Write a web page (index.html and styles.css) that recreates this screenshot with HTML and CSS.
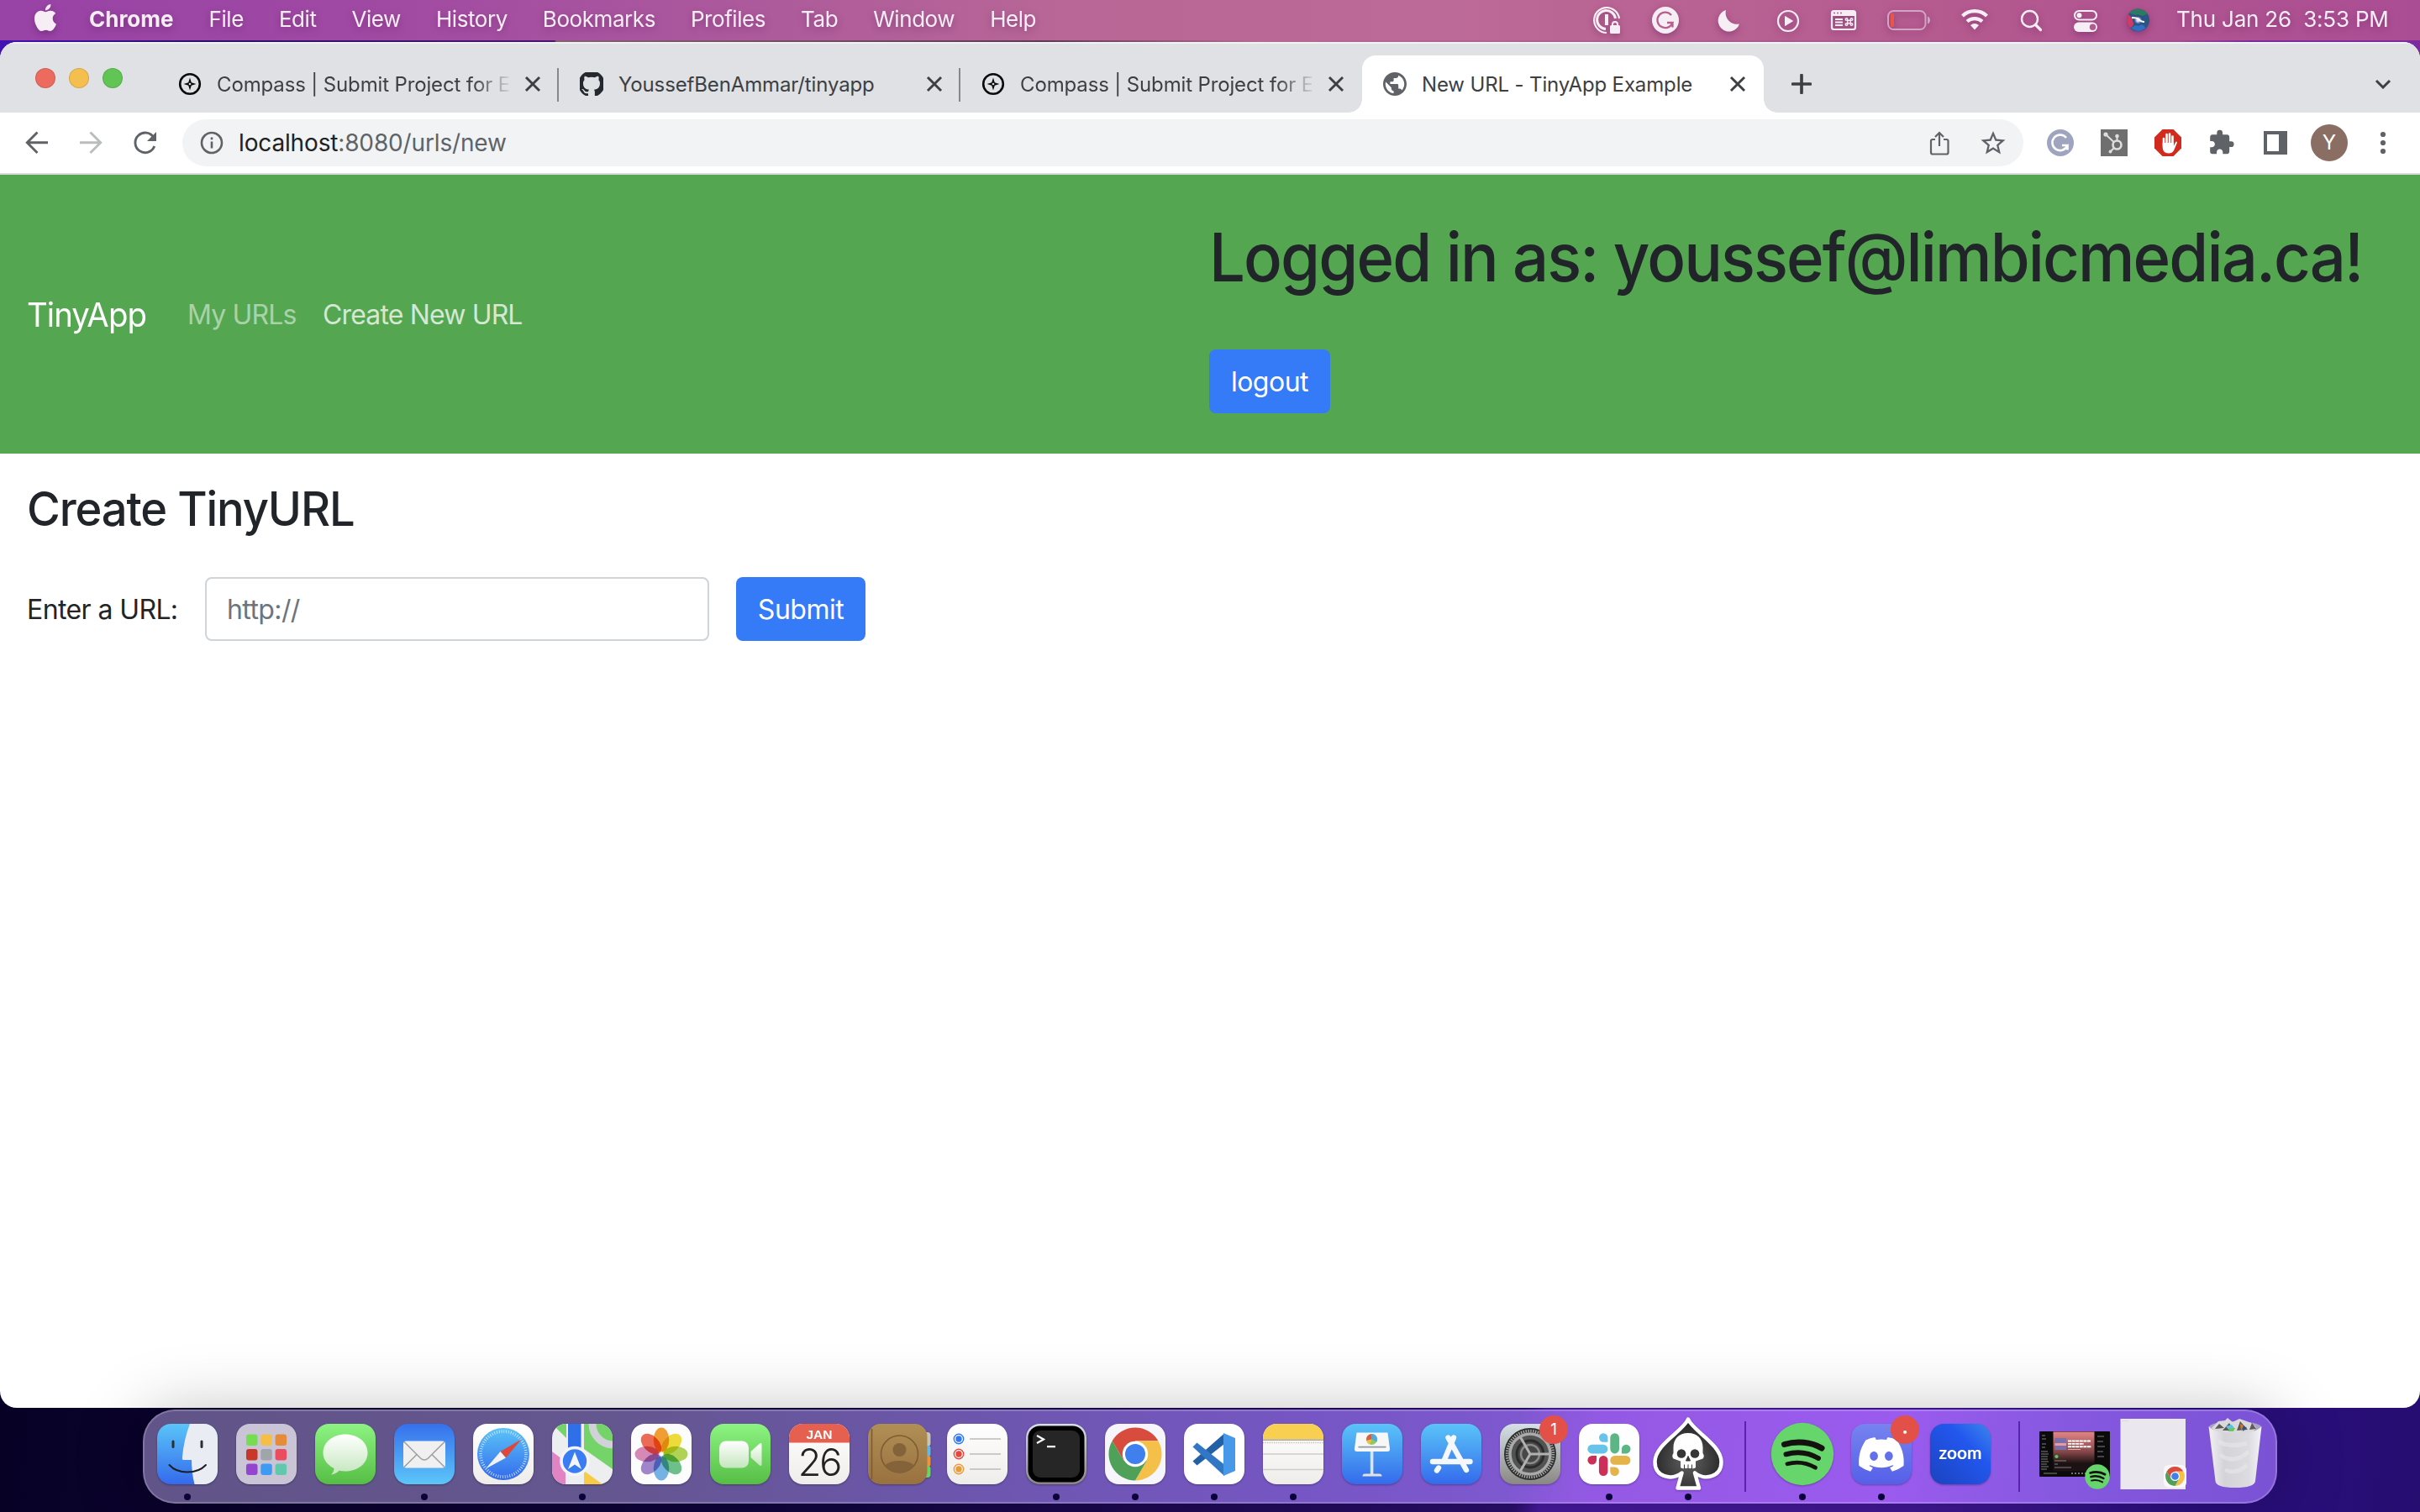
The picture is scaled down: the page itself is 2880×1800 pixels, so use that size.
FILE: index.html
```html
<!DOCTYPE html>
<html lang="en">
<head>
<meta charset="utf-8">
<title>New URL - TinyApp Example</title>
<link rel="stylesheet" href="styles.css">
</head>
<body>
<svg class="defs" width="0" height="0" aria-hidden="true">
  <defs>
    <linearGradient id="g-blue" x1="0" y1="0" x2="0" y2="1"><stop offset="0" stop-color="#5ac4f8"/><stop offset="1" stop-color="#346aec"/></linearGradient>
    <linearGradient id="g-mail" x1="0" y1="0" x2="0" y2="1"><stop offset="0" stop-color="#3670ec"/><stop offset="1" stop-color="#5cc6f9"/></linearGradient>
    <linearGradient id="g-green" x1="0" y1="0" x2="0" y2="1"><stop offset="0" stop-color="#8df382"/><stop offset="1" stop-color="#56be45"/></linearGradient>
    <linearGradient id="g-white" x1="0" y1="0" x2="0" y2="1"><stop offset="0" stop-color="#ffffff"/><stop offset="1" stop-color="#eeedea"/></linearGradient>
    <linearGradient id="g-silver" x1="0" y1="0" x2="0" y2="1"><stop offset="0" stop-color="#d5e0e6"/><stop offset="1" stop-color="#8a8783"/></linearGradient>
    <linearGradient id="g-bubble" x1="0" y1="0" x2="0" y2="1"><stop offset="0" stop-color="#ffffff"/><stop offset="1" stop-color="#c4e6bd"/></linearGradient>
    <linearGradient id="g-brown" x1="0" y1="0" x2="0" y2="1"><stop offset="0" stop-color="#b08f55"/><stop offset="1" stop-color="#99713f"/></linearGradient>
    <linearGradient id="g-zoom" x1="1" y1="0" x2="0" y2="1"><stop offset="0" stop-color="#3d86ea"/><stop offset=".35" stop-color="#2257ee"/><stop offset="1" stop-color="#1b43c0"/></linearGradient>
    <linearGradient id="g-discord" x1="0" y1="0" x2="0" y2="1"><stop offset="0" stop-color="#7683ef"/><stop offset="1" stop-color="#5560e8"/></linearGradient>
    <linearGradient id="g-trash" x1="0" y1="0" x2="1" y2="0"><stop offset="0" stop-color="#f2f1f5"/><stop offset=".3" stop-color="#d4d3d8"/><stop offset=".75" stop-color="#dcdbe0"/><stop offset="1" stop-color="#f4f3f8"/></linearGradient>
    <linearGradient id="g-album" x1="0" y1="0" x2="0" y2="1"><stop offset="0" stop-color="#e48587"/><stop offset=".5" stop-color="#87484b"/><stop offset=".8" stop-color="#1d1213"/></linearGradient>
    <radialGradient id="g-spade" cx=".5" cy=".6" r=".6"><stop offset="0" stop-color="#626262"/><stop offset="1" stop-color="#202020"/></radialGradient>
    <radialGradient id="g-siri" cx=".5" cy=".5" r=".5"><stop offset="0" stop-color="#ffffff"/><stop offset=".3" stop-color="#c9c3ee"/><stop offset=".65" stop-color="#2f5c9c"/><stop offset="1" stop-color="#2b4a6a"/></radialGradient>
    <clipPath id="tile"><rect width="72" height="72" rx="16.5"/></clipPath>
    <symbol id="close" viewBox="0 0 24 24"><path d="M5 5l14 14M19 5L5 19" stroke="#3c4043" stroke-width="2.9" stroke-linecap="square" fill="none"/></symbol>
    <symbol id="compass" viewBox="0 0 28 28"><circle cx="14" cy="14" r="11.8" fill="none" stroke="#0b0b0c" stroke-width="2.6"/><path d="M14 6.5l1.8 5.7 5.7 1.8-5.7 1.8L14 21.5l-1.8-5.7L6.500 14l5.700-1.800z" fill="#0b0b0c"/><circle cx="14" cy="14" r="1.300" fill="#dfe1e5"/></symbol>
    <symbol id="chrome" viewBox="0 0 72 72">
      <path d="M8.700 20.250A31.500 31.500 0 0 1 63.300 20.250H36V36L22.400 43.900z" fill="#d74c3d"/>
      <path d="M63.300 20.250A31.500 31.500 0 0 1 36 67.500L49.600 43.900 36 36V20.250z" fill="#f5c04a"/>
      <path d="M36 67.500A31.500 31.500 0 0 1 8.700 20.250L22.400 43.900 36 36l13.600 7.900z" fill="#4fa058"/>
      <circle cx="36" cy="36" r="15.200" fill="#fff"/><circle cx="36" cy="36" r="12" fill="#3f80ee"/>
    </symbol>
    <symbol id="spotify" viewBox="-2 -2 76 76">
      <circle cx="36" cy="36" r="37.200" fill="#66d56c"/>
      <g fill="none" stroke="#14120f" stroke-linecap="round"><path d="M14.500 24.500c15-4.500 32-3 44.500 4.500" stroke-width="7"/><path d="M16.500 36.300c13-3.800 27-2 38.500 4.700" stroke-width="5.900"/><path d="M18 47.700c11-3 23-1.500 33.500 4.500" stroke-width="4.800"/></g>
    </symbol>
  </defs>
</svg>

<header class="menubar">
  <svg class="apple" width="48" height="48" viewBox="0 0 48 48"><path transform="translate(9 5) scale(1.333)" fill="#f7edf5" d="M12.152 6.896c-.948 0-2.415-1.078-3.960-1.040-2.040.027-3.910 1.183-4.961 3.014-2.117 3.675-.546 9.103 1.519 12.090 1.013 1.454 2.208 3.090 3.792 3.039 1.520-.065 2.090-.987 3.935-.987 1.831 0 2.350.987 3.960.948 1.637-.026 2.676-1.480 3.676-2.948 1.156-1.688 1.636-3.325 1.662-3.415-.039-.013-3.182-1.221-3.220-4.857-.026-3.040 2.480-4.494 2.597-4.559-1.429-2.090-3.623-2.324-4.390-2.376-2-.156-3.675 1.090-4.610 1.090zM15.530 3.830c.843-1.012 1.400-2.427 1.245-3.830-1.207.052-2.662.805-3.532 1.818-.780.896-1.454 2.338-1.273 3.714 1.338.104 2.715-.688 3.559-1.701"/></svg>
  <nav class="menus">
    <span class="menu menu-app">Chrome</span><span class="menu">File</span><span class="menu">Edit</span><span class="menu">View</span><span class="menu">History</span><span class="menu">Bookmarks</span><span class="menu">Profiles</span><span class="menu">Tab</span><span class="menu">Window</span><span class="menu">Help</span>
  </nav>
  <div class="status">
    <svg width="60" height="48" viewBox="1890 0 60 48"><g fill="none" stroke="#f7edf5"><path d="M1912 39A15 15 0 1 1 1927 22" stroke-width="2.200"/><path d="M1911 34.500A11 11 0 1 1 1922.500 22" stroke-width="3"/><path d="M1912 17v13" stroke-width="4"/><path d="M1919 31v-2a3 3 0 0 1 6 0v3" stroke-width="2"/></g><rect x="1916" y="30" width="12" height="10" rx="1.500" fill="#f7edf5"/></svg>
    <svg width="80" height="48" viewBox="1950 0 80 48"><circle cx="1982" cy="24" r="16" fill="#f7edf5"/><path d="M1989 18a9.300 9.300 0 1 0 1.500 9h-6.500M1990.500 27v5.500" fill="none" stroke="#b5608f" stroke-width="2.300"/></svg>
    <svg width="70" height="48" viewBox="2030 0 70 48"><path d="M2054 12a13 13 0 1 0 16 16.500A13.500 13.500 0 0 1 2054 12z" fill="#f7edf5"/></svg>
    <svg width="60" height="48" viewBox="2100 0 60 48"><circle cx="2128" cy="25" r="12" fill="none" stroke="#f7edf5" stroke-width="2.200"/><path d="M2124.500 19.500v11l9-5.500z" fill="#f7edf5" stroke="#f7edf5" stroke-linejoin="round"/></svg>
    <svg width="70" height="48" viewBox="2160 0 70 48"><rect x="2180" y="13" width="28" height="22" rx="2.500" fill="none" stroke="#f7edf5" stroke-width="2.200"/><path d="M2179.500 14h29v5h-29z" fill="#f7edf5"/><path d="M2182 15.500h2m2 0h2m2 0h2" stroke="#b5608f" stroke-width="1.600"/><path d="M2184 23h9m-9 3.500h9m-9 3.500h9" stroke="#f7edf5" stroke-width="1.800"/><g fill="none" stroke="#f7edf5" stroke-width="1.400"><path d="M2198.800 24.300h3.400v3.400h-3.400z"/><circle cx="2197.500" cy="23" r="1.300"/><circle cx="2203.500" cy="23" r="1.300"/><circle cx="2197.500" cy="29" r="1.300"/><circle cx="2203.500" cy="29" r="1.300"/></g></svg>
    <svg width="86" height="48" viewBox="2230 0 86 48"><rect x="2247" y="13" width="44.500" height="22" rx="6.500" fill="none" stroke="#d5a3c4" stroke-width="2"/><path d="M2294 19.500c4 1.500 4 7.500 0 9z" fill="#d5a3c4"/><rect x="2250" y="16" width="4" height="16" rx="1.500" fill="#eb5545"/></svg>
    <svg width="70" height="48" viewBox="2316 0 70 48"><g fill="none" stroke="#f7edf5" stroke-width="4.200"><path d="M2335.500 19a21 21 0 0 1 29 0"/><path d="M2341 25.500a13.500 13.500 0 0 1 18 0"/></g><path d="M2345 30q5-4 10 0l-5 5.500z" fill="#f7edf5"/></svg>
    <svg width="64" height="48" viewBox="2386 0 64 48"><g fill="none" stroke="#f7edf5" stroke-linecap="round"><circle cx="2415.500" cy="22.500" r="9.500" stroke-width="2.400"/><path d="M2422.500 29.500l6 6" stroke-width="3.200"/></g></svg>
    <svg width="64" height="48" viewBox="2450 0 64 48"><rect x="2469" y="13" width="26" height="10.500" rx="5.250" fill="none" stroke="#f7edf5" stroke-width="2"/><circle cx="2474.500" cy="18.200" r="3" fill="#f7edf5"/><rect x="2468" y="26.500" width="28" height="11.500" rx="5.750" fill="#f7edf5"/><circle cx="2490.500" cy="32.300" r="3.700" fill="#b05a90"/></svg>
    <svg width="62" height="48" viewBox="2514 0 62 48"><circle cx="2544.500" cy="24" r="13.500" fill="#2c5580"/><path d="M2533 17a13.500 13.500 0 0 0 2 16.500q6-4 4-10z" fill="#cf3a66"/><path d="M2534 15.500a13.500 13.500 0 0 1 21.500 .5q-6 4-10 3t-11.500-3.500z" fill="#2b7a62"/><path d="M2536 33.500q9 7 17.500-.5-4-5-9-4t-8.500 4.500z" fill="#2f6fc4"/><circle cx="2544.500" cy="24" r="6.500" fill="url(#g-siri)"/><path d="M2537 21q7 0 9 2.500t6 2.500" stroke="#fff" stroke-width="1.800" fill="none"/></svg>
  </div>
  <time class="clock">Thu Jan 26&nbsp; 3:53 PM</time>
</header>

<main class="window">
  <div class="tabstrip">
    <div class="lights"><i class="light light-close"></i><i class="light light-min"></i><i class="light light-max"></i></div>
    <div class="tab"><svg class="favicon"><use href="#compass"/></svg><span class="tab-title tab-fade">Compass | Submit Project for E</span><svg class="tab-close"><use href="#close"/></svg></div>
    <div class="tab"><svg class="favicon" viewBox="0 0 16 16"><path transform="translate(-1 -1) scale(1.120)" fill="#24292f" d="M8 0C3.580 0 0 3.580 0 8c0 3.540 2.290 6.530 5.470 7.590.4.070.55-.17.55-.38 0-.19-.01-.82-.01-1.490-2.010.37-2.530-.49-2.690-.94-.09-.23-.48-.94-.82-1.130-.28-.15-.68-.52-.01-.53.63-.01 1.080.58 1.230.82.72 1.210 1.870.87 2.330.66.07-.52.28-.87.51-1.070-1.780-.2-3.640-.89-3.640-3.950 0-.87.31-1.590.82-2.150-.08-.2-.36-1.020.08-2.120 0 0 .67-.21 2.200.82.64-.18 1.320-.27 2-.27s1.360.09 2 .27c1.530-1.040 2.200-.82 2.200-.82.44 1.100.16 1.920.08 2.120.51.56.82 1.270.82 2.150 0 3.070-1.870 3.750-3.650 3.950.29.25.54.73.54 1.480 0 1.070-.01 1.930-.01 2.200 0 .21.15.46.55.38A8.010 8.010 0 0 0 16 8c0-4.420-3.580-8-8-8z"/></svg><span class="tab-title">YoussefBenAmmar/tinyapp</span><svg class="tab-close"><use href="#close"/></svg></div>
    <div class="tab tab-last"><svg class="favicon"><use href="#compass"/></svg><span class="tab-title tab-fade">Compass | Submit Project for E</span><svg class="tab-close"><use href="#close"/></svg></div>
    <div class="tab tab-active"><svg class="favicon" viewBox="2 2 20 20"><path fill="#5f6368" d="M12 2C6.480 2 2 6.480 2 12s4.480 10 10 10 10-4.480 10-10S17.520 2 12 2zm-1 17.930c-3.950-.49-7-3.850-7-7.930 0-.62.08-1.210.21-1.790L9 15v1c0 1.100.9 2 2 2v1.930zm6.900-2.540c-.26-.81-1-1.390-1.900-1.390h-1v-3c0-.55-.45-1-1-1H8v-2h2c.55 0 1-.45 1-1V7h2c1.100 0 2-.9 2-2v-.41c2.930 1.190 5 4.060 5 7.410 0 2.080-.8 3.970-2.100 5.390z"/></svg><span class="tab-title">New URL - TinyApp Example</span><svg class="tab-close"><use href="#close"/></svg></div>
    <svg class="new-tab" viewBox="0 0 24 24"><path d="M12 1.500v21M1.500 12h21" stroke="#3c4043" stroke-width="3.700" stroke-linecap="round"/></svg>
    <svg class="tab-search" viewBox="0 0 20 12"><path d="M2 2l8 8 8-8" fill="none" stroke="#3c4043" stroke-width="3"/></svg>
  </div>

  <div class="toolbar">
    <svg width="217" height="72" viewBox="0 134 217 72"><g fill="none" stroke-width="2.900"><path d="M57 169.800H33M44.500 157.500L32.300 169.800l12.200 12.300" stroke="#5f6368"/><path d="M95 169.800h24M107.500 157.500l12.200 12.300-12.200 12.300" stroke="#babcbe"/><path d="M183 164a11.800 11.800 0 1 0 .8 10" stroke="#5f6368"/></g><path d="M186 157v11h-11z" fill="#5f6368"/></svg>
    <div class="omnibox">
      <svg class="info" viewBox="0 0 28 28"><circle cx="14" cy="14" r="12" fill="none" stroke="#5f6368" stroke-width="2.600"/><path d="M14 12.500v8M14 7.500v2.800" stroke="#5f6368" stroke-width="2.600"/></svg>
      <span class="url"><b>localhost</b>:8080/urls/new</span>
      <svg width="128" height="56" viewBox="2280 142 128 56"><g fill="none" stroke="#5f6368" stroke-width="2.200"><path d="M2303 166h-3a2 2 0 0 0-2 2v13.500a2 2 0 0 0 2 2h16.500a2 2 0 0 0 2-2V168a2 2 0 0 0-2-2h-3.500M2308 174v-15.500M2303 163l5-5 5 5"/></g><path transform="translate(2354.600 153) scale(1.450)" fill="#5f6368" d="M22 9.240l-7.190-.62L12 2 9.190 8.630 2 9.240l5.460 4.730L5.820 21 12 17.270 18.180 21l-1.630-7.030L22 9.240zM12 15.400l-3.760 2.270 1-4.280-3.320-2.880 4.380-.38L12 6.100l1.710 4.040 4.380.38-3.320 2.880 1 4.280L12 15.400z"/></svg>
    </div>
    <svg width="342" height="72" viewBox="2408 134 342 72">
      <circle cx="2452" cy="170" r="16" fill="#9fa5bf"/><path d="M2459 164a9.300 9.300 0 1 0 1.500 9h-6.500M2460.500 173v5.500" fill="none" stroke="#fff" stroke-width="2.600"/>
      <rect x="2500" y="154" width="32" height="32" fill="#6f6f6f"/><g stroke="#dedede" fill="none"><circle cx="2519.500" cy="172.500" r="5" stroke-width="2.600"/><path d="M2506 160l9.500 9M2519.500 162v5M2516 176l-4 4" stroke-width="2"/></g><g fill="#dedede"><circle cx="2506" cy="160" r="2.600"/><circle cx="2519.500" cy="162" r="2.300"/><circle cx="2511.500" cy="180.500" r="1.900"/></g>
      <path d="M2573.500 154h13l9.500 9.500v13l-9.500 9.500h-13l-9.500-9.500v-13z" fill="#d22b1d"/><path d="M2575 174v-9M2578.500 172v-12M2582 172v-12.500M2585.500 172v-9.500" stroke="#fff" stroke-width="2.600" stroke-linecap="round"/><path d="M2573.700 170h13.200v4l2-4.500c1-1.800 2.600-1 1.800 1l-3.600 8.500q-1.800 3.500-6.200 3.500c-5 0-7.200-3-7.200-7.500z" fill="#fff"/>
      <path transform="translate(2627.500 153.500) scale(1.350)" fill="#5f6368" d="M20.500 11H19V7c0-1.100-.9-2-2-2h-4V3.500a2.500 2.500 0 0 0-5 0V5H4c-1.100 0-1.990.9-1.990 2v3.800H3.500c1.490 0 2.700 1.210 2.700 2.700s-1.210 2.700-2.700 2.700H2V20c0 1.100.9 2 2 2h3.800v-1.500c0-1.490 1.210-2.700 2.700-2.700s2.700 1.210 2.700 2.700V22H17c1.100 0 2-.9 2-2v-4h1.500a2.500 2.500 0 0 0 0-5z"/>
      <path d="M2694 156h28v28h-28zM2698 160v20h14v-20z" fill="#5f6368" fill-rule="evenodd"/>
    </svg>
    <span class="avatar">Y</span>
    <svg width="86" height="72" viewBox="2794 134 86 72"><g fill="#5f6368"><circle cx="2836" cy="160" r="3.100"/><circle cx="2836" cy="170" r="3.100"/><circle cx="2836" cy="180" r="3.100"/></g></svg>
  </div>

  <div class="navbar">
    <div class="brand"><a>TinyApp</a></div>
    <a class="nav-link nav-urls">My URLs</a>
    <a class="nav-link nav-create">Create New URL</a>
    <div class="account">
      <h1>Logged in as: youssef@limbicmedia.ca!</h1>
      <button class="btn btn-logout">logout</button>
    </div>
  </div>

  <section class="content">
    <h3>Create TinyURL</h3>
    <form class="url-form">
      <label>Enter a URL:</label>
      <div class="field">http://</div>
      <button type="button" class="btn btn-submit">Submit</button>
    </form>
  </section>
</main>

<footer class="dock">
  <div class="slot running"><svg class="app" viewBox="0 0 72 72"><g clip-path="url(#tile)"><rect width="72" height="72" fill="url(#g-blue)"/><path d="M39 0h33v72H44.500Q41 58 41 43H31Q29.500 43 30 39 32 18 39 0z" fill="#e9edf3"/></g><path d="M19 21v6.500M53 21v6.500" stroke="#2a2e35" stroke-width="3" stroke-linecap="round"/><path d="M14.500 49q7.500 8.500 21.500 8.500T58 49" fill="none" stroke="#1c1e22" stroke-width="2" stroke-linecap="round"/></svg></div>
  <div class="slot"><svg class="app" viewBox="0 0 72 72"><rect width="72" height="72" rx="16.500" fill="#c9c4d6"/><g><rect x="12" y="12.500" width="13.500" height="13.500" rx="3" fill="#76dd52"/><rect x="29.300" y="12.500" width="13.500" height="13.500" rx="3" fill="#f5bf45"/><rect x="46.600" y="12.500" width="13.500" height="13.500" rx="3" fill="#e58b3a"/><rect x="12" y="30" width="13.500" height="13.500" rx="3" fill="#c9372b"/><rect x="29.300" y="30" width="13.500" height="13.500" rx="3" fill="#9fa5a8"/><rect x="46.600" y="30" width="13.500" height="13.500" rx="3" fill="#ea4d60"/><rect x="12" y="47.500" width="13.500" height="13.500" rx="3" fill="#9445d0"/><rect x="29.300" y="47.500" width="13.500" height="13.500" rx="3" fill="#3f9bf2"/><rect x="46.600" y="47.500" width="13.500" height="13.500" rx="3" fill="#61c8ae"/></g></svg></div>
  <div class="slot"><svg class="app" viewBox="0 0 72 72"><rect width="72" height="72" rx="16.500" fill="url(#g-green)"/><path d="M36 12.500c15 0 26.500 9.500 26.500 22S51 56.500 36 56.500q-4 0-7.500-.8-4 4.300-9.500 4.800 3.500-3.500 3.500-7.500C14.500 49 9.500 42.500 9.500 34.500c0-12.500 11.500-22 26.500-22z" fill="url(#g-bubble)"/></svg></div>
  <div class="slot running"><svg class="app" viewBox="0 0 72 72"><rect width="72" height="72" rx="16.500" fill="url(#g-mail)"/><rect x="11" y="20.500" width="50" height="32" rx="3.500" fill="#f0f0f1"/><path d="M12 51.500l15-15M60 51.500L45 36.500M12 21.500l19.500 19.500q4.500 4 9 0L60 21.500" fill="none" stroke="#a0a0a4" stroke-width="1.600"/></svg></div>
  <div class="slot"><svg class="app" viewBox="0 0 72 72"><rect width="72" height="72" rx="16.500" fill="url(#g-white)"/><circle cx="36" cy="36" r="31" fill="url(#g-blue)"/><circle cx="36" cy="36" r="27" fill="none" stroke="#dcecff" stroke-width="3.600" stroke-dasharray=".8 2.027"/><path d="M57.500 18.500L39 40.500 32.500 33z" fill="#e0473b"/><path d="M15 53.500L32.500 33 39 40.500z" fill="#f2f2f4"/></svg></div>
  <div class="slot running"><svg class="app" viewBox="0 0 72 72"><g clip-path="url(#tile)"><rect width="72" height="72" fill="#eceef0"/><path d="M0 0h17v17zM38 0h34v54L38 30z" fill="#74d46a"/><path d="M0 33l16 12v27H0z" fill="#e283c4"/><path d="M38 56l22 16H38z" fill="#f7cb45"/><path d="M72 25a25 25 0 0 1-24-25" fill="none" stroke="#d0d2d8" stroke-width="9"/><rect x="19" width="15.500" height="40" fill="#2f6fe8"/></g><circle cx="27" cy="44.500" r="16" fill="#3a7cf3" stroke="#f4f4f6" stroke-width="3.600"/><path d="M27 33.500l8 20.500-8-5.500-8 5.500z" fill="#f4f6fa"/></svg></div>
  <div class="slot"><svg class="app" viewBox="0 0 72 72"><rect width="72" height="72" rx="16.500" fill="#fdfcfd"/><g class="petals"><ellipse cx="36" cy="19" rx="9.300" ry="14.500" fill="#f2a034"/><ellipse cx="36" cy="19" rx="9.300" ry="14.500" fill="#eede3a" transform="rotate(45 36 36)"/><ellipse cx="36" cy="19" rx="9.300" ry="14.500" fill="#b2d657" transform="rotate(90 36 36)"/><ellipse cx="36" cy="19" rx="9.300" ry="14.500" fill="#6fc28a" transform="rotate(135 36 36)"/><ellipse cx="36" cy="19" rx="9.300" ry="14.500" fill="#76b3e4" transform="rotate(180 36 36)"/><ellipse cx="36" cy="19" rx="9.300" ry="14.500" fill="#a088cc" transform="rotate(225 36 36)"/><ellipse cx="36" cy="19" rx="9.300" ry="14.500" fill="#d88bb8" transform="rotate(270 36 36)"/><ellipse cx="36" cy="19" rx="9.300" ry="14.500" fill="#ee6c56" transform="rotate(315 36 36)"/></g></svg></div>
  <div class="slot"><svg class="app" viewBox="0 0 72 72"><rect width="72" height="72" rx="16.500" fill="url(#g-green)"/><rect x="11" y="20.500" width="35" height="32" rx="8" fill="url(#g-bubble)"/><path d="M48.500 33L59 23.500q2.500-1.500 2.500 1.500v23q0 3-2.500 1.500L48.500 40z" fill="url(#g-bubble)"/></svg></div>
  <div class="slot"><svg class="app" viewBox="0 0 72 72"><g clip-path="url(#tile)"><rect width="72" height="72" fill="url(#g-white)"/><rect width="72" height="22.500" fill="#e5604f"/></g><text class="cal-month" x="36" y="17.500">JAN</text><text class="cal-day" x="36" y="61.500">26</text></svg></div>
  <div class="slot"><svg class="app" viewBox="0 0 72 72"><rect x="62" y="10" width="12.500" height="17" rx="4" fill="#c8c5b8"/><rect x="62" y="26" width="12.500" height="13" rx="3" fill="#64b7e6"/><rect x="62" y="38" width="12.500" height="13" rx="3" fill="#ef9336"/><rect x="62" y="50" width="12.500" height="14" rx="4" fill="#68d663"/><rect width="70.500" height="72" rx="15" fill="url(#g-brown)"/><g fill="none" stroke="#7d5c33" stroke-width="1.600"><path d="M4.500 6v60"/><circle cx="37.500" cy="36" r="22"/></g><circle cx="37.500" cy="31" r="8" fill="#84623a"/><path d="M20 49.500q6-5.500 17.500-5.500T55 49.500A22 22 0 0 1 20 49.500z" fill="#84623a"/></svg></div>
  <div class="slot"><svg class="app" viewBox="0 0 72 72"><rect width="72" height="72" rx="16.500" fill="url(#g-white)"/><g fill="none" stroke-width="1.400"><circle cx="14" cy="18" r="5.700" stroke="#2f78f0"/><circle cx="14" cy="36" r="5.700" stroke="#e2493a"/><circle cx="14" cy="54" r="5.700" stroke="#ea9b36"/></g><circle cx="14" cy="18" r="3.700" fill="#2f78f0"/><circle cx="14" cy="36" r="3.700" fill="#e2493a"/><circle cx="14" cy="54" r="3.700" fill="#ea9b36"/><path d="M27 18h37M27 36h37M27 54h37" stroke="#bdbcbb" stroke-width="1.700"/></svg></div>
  <div class="slot running"><svg class="app" viewBox="0 0 72 72"><rect width="72" height="72" rx="16.500" fill="url(#g-silver)"/><rect x="2.500" y="2.500" width="67" height="67" rx="14" fill="#000"/><rect x="8" y="8" width="56" height="56" rx="9" fill="#262626"/><path d="M13 14l8 4.500-8 4.500M25 27.200h10" fill="none" stroke="#fff" stroke-width="2.200"/></svg></div>
  <div class="slot running"><svg class="app" viewBox="0 0 72 72"><rect width="72" height="72" rx="16.500" fill="#f6f5fb"/><use href="#chrome"/></svg></div>
  <div class="slot running"><svg class="app" viewBox="0 0 72 72"><rect width="72" height="72" rx="16.500" fill="#fff"/><path d="M10.500 44.500l5 5L48 24V11.500z" fill="#2460a6"/><path d="M10.500 27.500l5-5L48 48.500v13.500z" fill="#3277c5"/><path d="M47 11l14 6v39l-14 6z" fill="#4898ea"/></svg></div>
  <div class="slot running"><svg class="app" viewBox="0 0 72 72"><g clip-path="url(#tile)"><rect width="72" height="72" fill="url(#g-white)"/><rect width="72" height="18.500" fill="#f8cf50"/><path d="M0 19.200h72" stroke="#aaa69c" stroke-width="1.500"/><path d="M0 22.500h72" stroke="#bdbab3" stroke-width="1.600" stroke-dasharray="1.200 1.400"/><path d="M0 36h72M0 54.500h72" stroke="#cfcdca" stroke-width="1.300"/></g></svg></div>
  <div class="slot"><svg class="app" viewBox="0 0 72 72"><rect width="72" height="72" rx="16.500" fill="url(#g-blue)"/><path d="M33.800 33h3.600v28h-3.600z" fill="#dfe4ea"/><path d="M17.500 10.500h37l2.500 19q.4 3.500-3 3.500H18q-3.400 0-3-3.500z" fill="#f7f7f8"/><path d="M19.500 27.700h33" stroke="#8e99a6" stroke-width="1.800"/><path d="M24.500 62.500q0-3 3-3h17q3 0 3 3z" fill="#e3e1dd"/><circle cx="35.500" cy="18.500" r="6.500" fill="#8fc957"/><path d="M35.500 18.500V12a6.500 6.500 0 0 0-6.300 8z" fill="#e15a48"/><path d="M35.500 18.500V12a6.500 6.500 0 0 1 5.800 9.500z" fill="#4fa9e8"/><path d="M35.500 18.500l-6.300 1.600a6.500 6.500 0 0 0 4 4.500z" fill="#f2bf43"/></svg></div>
  <div class="slot"><svg class="app" viewBox="0 0 72 72"><rect width="72" height="72" rx="16.500" fill="url(#g-blue)"/><g stroke="#f4f7fb" stroke-width="6.400" stroke-linecap="round"><path d="M39 16.500L27.500 44M14 45h44.500M21 52.500l-2 3M32.500 16.500L54 55"/></g></svg></div>
  <div class="slot"><svg class="app" viewBox="0 0 72 72"><rect width="72" height="72" rx="16.500" fill="url(#g-silver)"/><circle cx="36" cy="36" r="31" fill="#2c2d2d"/><circle cx="36" cy="36" r="27.500" fill="none" stroke="#a2a3a2" stroke-width="3.500" stroke-dasharray="1.500 1.380"/><circle cx="36" cy="36" r="24" fill="#525352" stroke="#a9aaa9" stroke-width="3.500"/><circle cx="36" cy="36" r="16" fill="#464746" stroke="#2a2b2b" stroke-width="3"/><circle cx="36" cy="36" r="11" fill="none" stroke="#888988" stroke-width="2.500"/><path d="M36 36h23M36 36L24.500 16M36 36L24.500 56" stroke="#b0b1b0" stroke-width="3"/></svg><span class="badge">1</span></div>
  <div class="slot running"><svg class="app" viewBox="0 0 72 72"><rect width="72" height="72" rx="16.500" fill="#fefefe"/><g fill="#67c3ea"><path d="M34.400 21.700h-5.200a5.200 5.200 0 1 1 5.200-5.200z"/><rect x="10.300" y="24.700" width="24.100" height="10.700" rx="5.300"/></g><g fill="#5cb585"><rect x="37.300" y="11.300" width="10.700" height="24.100" rx="5.300"/><path d="M50.900 35.400v-5.300a5.300 5.300 0 1 1 5.300 5.300z"/></g><g fill="#cc3058"><path d="M21 38v5.300a5.300 5.300 0 1 1-5.300-5.300z"/><rect x="23.900" y="38" width="10.500" height="24" rx="5.200"/></g><g fill="#e4b44a"><rect x="37.300" y="38" width="24.100" height="10.700" rx="5.300"/><path d="M37.300 51.400h5.400a5.300 5.300 0 1 1-5.400 5.300z"/></g></svg></div>
  <div class="slot running"><svg class="app" viewBox="0 0 72 72"><path d="M36-5.500C42 9 75.500 24.500 75.500 45.500 75.500 63 56 68 44 58.500L49 76.500H23.500L28.500 58.500C16 68-3.500 63-3.500 45.500-3.500 24.500 30 9 36-5.500z" fill="url(#g-spade)" stroke="#fff" stroke-width="4.500" stroke-linejoin="round"/><path d="M36 11c11 0 17.500 7 17.500 17v7q2.500 3.500 0 6.500l-8.500 3v7.500q-2.300 2-4.500 1h-9q-2.200 1-4.500-1v-7.500l-8.500-3q-2.500-3 0-6.500v-7c0-10 6.500-17 17.500-17z" fill="#fff"/><circle cx="28" cy="35.500" r="5.300" fill="#363636"/><circle cx="44" cy="35.500" r="5.300" fill="#363636"/><path d="M36 38.500l2.500 5.500h-5zM31.500 48.500v5M36 48.500v5M40.500 48.500v5" fill="#363636" stroke="#363636"/></svg></div>
  <div class="divider divider-a"></div>
  <div class="slot running"><svg class="app app-round"><use href="#spotify"/></svg></div>
  <div class="slot running"><svg class="app" viewBox="0 0 72 72"><rect width="72" height="72" rx="16.500" fill="url(#g-discord)"/><path transform="translate(9.200 9.700) scale(2.230)" fill="#fff" d="M20.317 4.370a19.791 19.791 0 0 0-4.885-1.515c-.290.400-.520.850-.690 1.287a18.270 18.270 0 0 0-5.487 0c-.170-.430-.400-.880-.690-1.287A19.736 19.736 0 0 0 3.650 4.398C.533 9.046-.319 13.580.099 18.058a19.900 19.900 0 0 0 6.060 3.050c.490-.650.930-1.350 1.280-2.080-.680-.250-1.340-.560-1.960-.930l.480-.380c3.928 1.793 8.180 1.793 12.061 0l.490.380c-.620.370-1.280.680-1.960.940.360.720.780 1.410 1.280 2.060a19.830 19.830 0 0 0 6.070-3.040c.500-5.177-.838-9.674-3.583-13.688zM8.020 15.331c-1.182 0-2.157-1.086-2.157-2.419s.956-2.419 2.157-2.419c1.211 0 2.176 1.095 2.157 2.419 0 1.333-.956 2.419-2.157 2.419zm7.975 0c-1.183 0-2.157-1.086-2.157-2.419s.955-2.419 2.157-2.419c1.211 0 2.176 1.095 2.157 2.419 0 1.333-.946 2.419-2.157 2.419z"/></svg><span class="badge badge-dot">•</span></div>
  <div class="slot"><svg class="app" viewBox="0 0 72 72"><rect width="72" height="72" rx="16.500" fill="url(#g-zoom)"/><text class="zoom-word" x="36" y="42" textLength="51" lengthAdjust="spacingAndGlyphs">zoom</text></svg></div>
  <div class="divider divider-b"></div>
  <div class="slot slot-thumb"><svg width="84" height="84" viewBox="2427 1689 84 84">
    <rect x="2427" y="1704" width="84" height="54" rx="1" fill="#0c0b0c"/><rect x="2443.500" y="1704.500" width="49" height="47" fill="url(#g-album)"/>
    <rect x="2445.500" y="1712" width="13.500" height="14" fill="#7c6fa9"/><path d="M2445.500 1718h13.500v3h-13.500z" fill="#e79aa0"/>
    <g stroke="#fff" stroke-width="1.900" stroke-dasharray="4 .6"><path d="M2461 1715.500h27M2461 1718.900h19M2461 1722.300h28"/></g><path d="M2461 1725.500h15" stroke="#e5b5b5" stroke-width=".9"/>
    <g stroke="#8d8d8d" stroke-width=".9"><path d="M2430 1709h4M2430 1713h5M2430 1719h5M2430 1723h4M2429 1728h8M2429 1731h9M2429 1734h8M2429 1737h8M2429 1740h9M2429 1743h7M2429 1746h9M2429 1749h7M2496 1710h8M2496 1716h7M2496 1722h9M2496 1728h7M2496 1734h8M2445 1739h14M2445 1743h4M2445 1747h20M2432 1754h16"/></g><circle cx="2447.500" cy="1734" r="2.100" fill="#56cf62"/><path d="M2465 1754h20" stroke="#ddd" stroke-dasharray="2 2"/>
    <svg x="2481" y="1743" width="30" height="30"><use href="#spotify"/></svg></svg></div>
  <div class="slot slot-doc"><svg width="84" height="84" viewBox="2524 1689 84 84"><rect x="2524.500" y="1689" width="77.500" height="84" fill="#eae7ef"/><path d="M2527 1691.500h7" stroke="#d0cdd6" stroke-dasharray="1.500 1"/><rect x="2576" y="1744" width="27" height="27" rx="6" fill="#f8f7fa"/><svg x="2576.500" y="1744.500" width="26" height="26"><use href="#chrome"/></svg></svg></div>
  <div class="slot slot-trash"><svg width="64" height="84" viewBox="0 0 64 84"><ellipse cx="32" cy="11" rx="31" ry="7" fill="#a9a2c6"/><path d="M4 12L12 4l8-1 3-3 6 5 8-4 6 2 8 3 6 5-5 9-20 3-20-3z" fill="#d9d8db"/><path d="M8 13l5-6 6 5zM17 15l8-9 5 9zM34 15l4-11 9 10zM49 14l3-8 5 7z" fill="#5d5a58"/><path d="M21 10l7-2 3 4-7 2z" fill="#5bc2e6"/><path d="M26 12l6 0-2 4-6 0z" fill="#68c95e"/><path d="M38 7l4 2-3 6z" fill="#d9762f"/><path d="M42 9l4 3-5 4z" fill="#304f8d"/><path d="M.500 10Q8 18.500 32 18.500T63.500 10L56 75q-1 8-24 8T8.500 75z" fill="url(#g-trash)"/><path d="M12 28q14 8 34 2M14 44q18 12 34-4M20 62q14 6 26-6" stroke="#e8e7ea" stroke-width="5" fill="none" opacity=".6"/></svg></div>
</footer>
</body>
</html>
```
FILE: styles.css
```css
* { box-sizing: border-box; }
body {
  margin: 0;
  width: 2880px;
  height: 1800px;
  overflow: hidden;
  display: flex;
  flex-direction: column;
  font-family: Inter, "Liberation Sans", sans-serif;
  background:
    linear-gradient(90deg, #4212b4 0, #2a0f70 8%, #4a1670 22.900%, #86606f 23%, #5e3a55 43%, #b36a94 52%, #a04f8e 90%, #7a2aa0 93%, #7e2a9e 100%) top / 100% 90px no-repeat,
    linear-gradient(95deg, #070122 0, #10053f 35%, #1e0a55 50%, #2c0f70 64.500%, #4a1aa3 65.500%, #43189a 80%, #2a0f80 92%, #260d70 100%);
}
svg { display: block; flex: none; }
.defs { position: absolute; }

.menubar {
  height: 48px;
  flex: none;
  display: flex;
  align-items: center;
  padding-left: 29px;
  color: #f7edf5;
  font-size: 26px;
  background: linear-gradient(90deg, #9843a6 0, #9f48a4 14%, #b86796 44%, #bc6a97 60%, #b4598f 82%, #ab4d94 100%);
}
.menubar svg, .menubar .menu, .clock { filter: drop-shadow(0 3px 4px rgba(70, 10, 70, .35)); }
.menus { display: flex; gap: 42px; padding: 0 0 3px 29px; letter-spacing: -.44px; }
.menu-app { font-weight: 700; letter-spacing: 0; }
.status { display: flex; margin-left: auto; }
.clock { width: 304px; padding: 0 0 3px 14px; white-space: nowrap; letter-spacing: -.2px; }

.window {
  height: 1626px;
  margin-top: 2px;
  flex: none;
  display: flex;
  flex-direction: column;
  background: #fff;
  border-radius: 20px;
  overflow: hidden;
}
.tabstrip {
  height: 84px;
  flex: none;
  display: flex;
  align-items: flex-end;
  background: #dfe1e5;
  border-top: 2px solid #f1f2f4;
}
.lights { display: flex; gap: 16px; padding-left: 42px; width: 187px; align-self: center; }
.light { width: 24px; height: 24px; border-radius: 50%; border: 1px solid rgba(0, 0, 0, .12); }
.light-close { background: #ed6a5f; }
.light-min { background: #f5bf4f; }
.light-max { background: #61c555; }
.tab {
  width: 478px;
  height: 68px;
  flex: none;
  display: flex;
  align-items: center;
  padding: 0 19px 0 25px;
  font-size: 24px;
  letter-spacing: -.14px;
  color: #3c4043;
  background: linear-gradient(#85888c, #85888c) right 0 top 15px / 2px 40px no-repeat;
}
.tab-last { background: none; }
.tab-active { background: #fff; border-radius: 16px 16px 0 0; position: relative; }
.tab-active::before, .tab-active::after {
  content: "";
  position: absolute;
  bottom: 0;
  width: 16px;
  height: 16px;
}
.tab-active::before { right: 100%; background: radial-gradient(circle at 0 0, transparent 15.500px, #fff 16px); }
.tab-active::after { left: 100%; background: radial-gradient(circle at 100% 0, transparent 15.500px, #fff 16px); }
.favicon { width: 28px; height: 28px; }
.tab-title { flex: 1; margin-left: 18px; white-space: nowrap; overflow: hidden; }
.tab-fade { -webkit-mask-image: linear-gradient(90deg, #000 305px, transparent 352px); mask-image: linear-gradient(90deg, #000 305px, transparent 352px); }
.tab-close { width: 24px; height: 24px; }
.new-tab { width: 24px; height: 24px; margin: 0 0 22px 33px; }
.tab-search { width: 20px; height: 12px; margin: 0 34px 28px auto; }

.toolbar {
  height: 74px;
  flex: none;
  display: flex;
  align-items: flex-start;
  border-bottom: 2px solid #dadce0;
}
.omnibox {
  flex: 1;
  height: 56px;
  margin-top: 8px;
  border-radius: 28px;
  background: #f1f3f4;
  display: flex;
  align-items: center;
  padding-left: 21px;
}
.info { width: 28px; height: 28px; }
.url { flex: 1; margin-left: 18px; font-size: 28px; letter-spacing: -.15px; color: #5f6368; }
.url b { font-weight: 400; color: #202124; }
.avatar {
  width: 44px;
  height: 44px;
  margin-top: 14px;
  border-radius: 50%;
  background: #8a6e63;
  color: #fff;
  font-size: 24px;
  line-height: 44px;
  text-align: center;
}

.navbar {
  height: 332px;
  flex: none;
  display: flex;
  align-items: center;
  padding: 0 32px;
  background: #54a651;
}
.brand { width: 191px; padding-top: 2px; font-size: 40px; line-height: 60px; letter-spacing: -1px; color: #fff; }
.brand a { display: inline-block; transform: scaleX(.96); transform-origin: left; }
.nav-link { width: 161px; padding-top: 2px; font-size: 32px; line-height: 48px; letter-spacing: -.85px; color: rgba(255, 255, 255, .5); }
.nav-create { color: rgba(255, 255, 255, .75); width: auto; }
.account { margin-left: auto; width: 1409px; padding-top: 2px; }
h1, h3 { margin: 0; font-weight: 500; color: #212529; white-space: nowrap; transform-origin: left; }
h1 { font-size: 80px; line-height: 96px; margin-bottom: 62px; letter-spacing: -2px; transform: scaleX(.95); }
.btn {
  height: 76px;
  border: 0;
  border-radius: 8px;
  padding: 1px 0 0;
  background: #357af6;
  color: #fff;
  font: 400 32px/75px Inter, "Liberation Sans", sans-serif;
  letter-spacing: -.5px;
}
.btn-logout { width: 144px; display: block; }
.btn-submit { width: 154px; }

.content { padding: 32px; color: #212529; }
h3 { font-size: 56px; line-height: 68px; letter-spacing: -1.2px; transform: scaleX(.97); }
.url-form { display: flex; align-items: center; margin-top: 47px; font-size: 32px; letter-spacing: -.6px; }
label { width: 212px; padding-top: 1px; white-space: nowrap; }
.field {
  width: 600px;
  height: 76px;
  margin-right: 32px;
  padding-left: 24px;
  line-height: 73px;
  border: 2px solid #ced4da;
  border-radius: 8px;
  color: #6c757d;
}

.dock {
  width: 2540px;
  height: 112px;
  margin: 2px 0 0 170px;
  flex: none;
  position: relative;
  display: flex;
  padding-left: 4px;
  border: 2px solid rgba(255, 255, 255, .2);
  border-radius: 38px;
  background: linear-gradient(100deg, #615488 0, #64568f 22%, #6c56ac 38%, #7756c6 56%, #7e58cf 64%, #9459e4 68%, #9a5bee 82%, #8558df 90%, #7a52d4 100%) border-box;
  box-shadow: 0 4px 80px rgba(0, 0, 0, .26);
}
.slot { width: 94px; flex: none; position: relative; display: flex; flex-direction: column; align-items: center; padding-top: 14.500px; }
.running::after { content: ""; width: 8px; height: 8px; margin-top: 11.500px; border-radius: 50%; background: #0a0238; }
.app { width: 72px; height: 72px; overflow: visible; filter: drop-shadow(0 1px 1px rgba(0, 0, 0, .3)); }
.app-round { width: 76px; height: 76px; margin: -2px 0; }
.petals ellipse { mix-blend-mode: multiply; }
.cal-month { font: 700 15.500px "Liberation Sans", sans-serif; fill: #fff; text-anchor: middle; }
.cal-day { font: 300 45px Inter, sans-serif; fill: #222; text-anchor: middle; letter-spacing: -2px; }
.zoom-word { font: 700 21px Lato, sans-serif; fill: #fff; text-anchor: middle; }
.badge {
  position: absolute;
  top: 5px;
  left: 58px;
  width: 34px;
  height: 34px;
  border-radius: 50%;
  background: #e25048;
  color: #fff;
  font-size: 19px;
  line-height: 34px;
  text-align: center;
}
.badge-dot { font-size: 12px; line-height: 38px; }
.divider { width: 2px; height: 84px; margin-top: 12px; flex: none; background: #5a22ad; }
.divider-a { margin-left: 20px; margin-right: 20px; }
.divider-b { margin-left: 22px; margin-right: 22px; }
.slot-thumb { width: 86px; padding-top: 9px; }
.slot-doc { width: 106px; padding-top: 9px; }
.slot-trash { width: 84px; padding-top: 8px; }
```
